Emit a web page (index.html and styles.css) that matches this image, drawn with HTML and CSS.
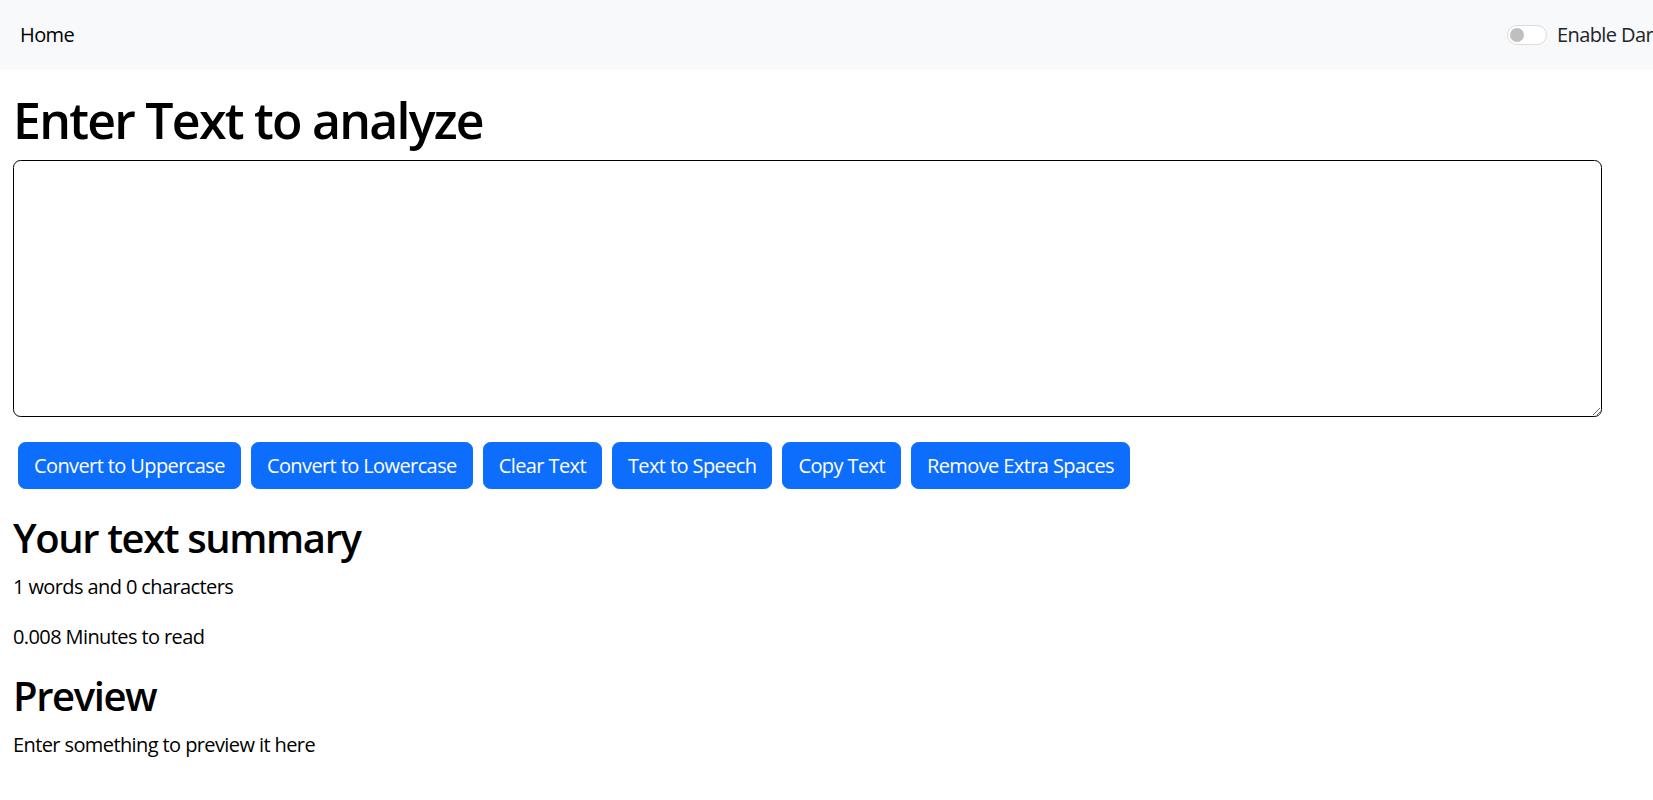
FILE: index.html
```html
<!DOCTYPE html>
<html lang="en">
<head>
<meta charset="utf-8">
<title>TextUtils</title>
<link rel="stylesheet" href="styles.css">
</head>
<body>
<nav class="navbar">
  <a class="nav-home" href="#">Home</a>
  <div class="dark-toggle">
    <span class="switch"><span class="knob"></span></span>
    <label class="switch-label">Enable Dark Mode</label>
  </div>
</nav>
<main class="container editor">
  <h1 class="title">Enter Text to analyze</h1>
  <textarea class="text-box" rows="8"></textarea>
  <div class="btn-row">
    <button class="btn">Convert to Uppercase</button>
    <button class="btn">Convert to Lowercase</button>
    <button class="btn">Clear Text</button>
    <button class="btn">Text to Speech</button>
    <button class="btn">Copy Text</button>
    <button class="btn">Remove Extra Spaces</button>
  </div>
</main>
<section class="container summary">
  <h2 class="sub">Your text summary</h2>
  <p class="line">1 words and 0 characters</p>
  <p class="line">0.008 Minutes to read</p>
  <h2 class="sub">Preview</h2>
  <p class="line">Enter something to preview it here</p>
</section>
</body>
</html>
```
FILE: styles.css
```css
html {
  overflow-x: hidden;
}
body {
  margin: 0;
  font-family: "Open Sans", "Noto Sans", sans-serif;
  font-size: 20px;
  line-height: 1.5;
  letter-spacing: -0.03em;
  color: #000;
  background: #fff;
}
.navbar {
  height: 70px;
  background: #f8f9fa;
  display: flex;
  align-items: center;
  padding-left: 20px;
}
.nav-home {
  flex: 1;
  color: #000;
  text-decoration: none;
}
.dark-toggle {
  width: 146px;
  flex: none;
  display: flex;
  align-items: center;
  white-space: nowrap;
  color: #212529;
}
.switch {
  width: 40px;
  height: 20px;
  box-sizing: border-box;
  border: 1px solid #dcdcdc;
  border-radius: 10px;
  background: #fff;
  display: flex;
  align-items: center;
  padding-left: 2px;
  flex: none;
}
.knob {
  width: 14px;
  height: 14px;
  border-radius: 50%;
  background: #bfbfbf;
}
.switch-label {
  margin-left: 10px;
}
.container {
  padding-left: 13px;
}
.editor {
  margin-top: 20px;
}
.title {
  font-size: 50px;
  line-height: 1.2;
  font-weight: 600;
  letter-spacing: -0.035em;
  margin: 0 0 10px;
}
.text-box {
  display: block;
  width: 1589px;
  height: 257px;
  box-sizing: border-box;
  border: 1px solid #000;
  border-radius: 7.5px;
  padding: 7.5px 15px;
  margin: 0 0 20px;
  font: inherit;
  background: #fff;
}
.btn-row {
  display: flex;
  gap: 10px;
  padding: 5px;
}
.btn {
  font: inherit;
  letter-spacing: inherit;
  color: #fff;
  background: #0d6efd;
  border: 1px solid #0d6efd;
  border-radius: 7.5px;
  padding: 7.5px 15px;
  line-height: 1.5;
}
.summary {
  margin-top: 20px;
}
.sub {
  font-size: 40px;
  line-height: 1.2;
  font-weight: 600;
  letter-spacing: -0.035em;
  margin: 0 0 10px;
}
.line {
  margin: 0 0 20px;
}
```
